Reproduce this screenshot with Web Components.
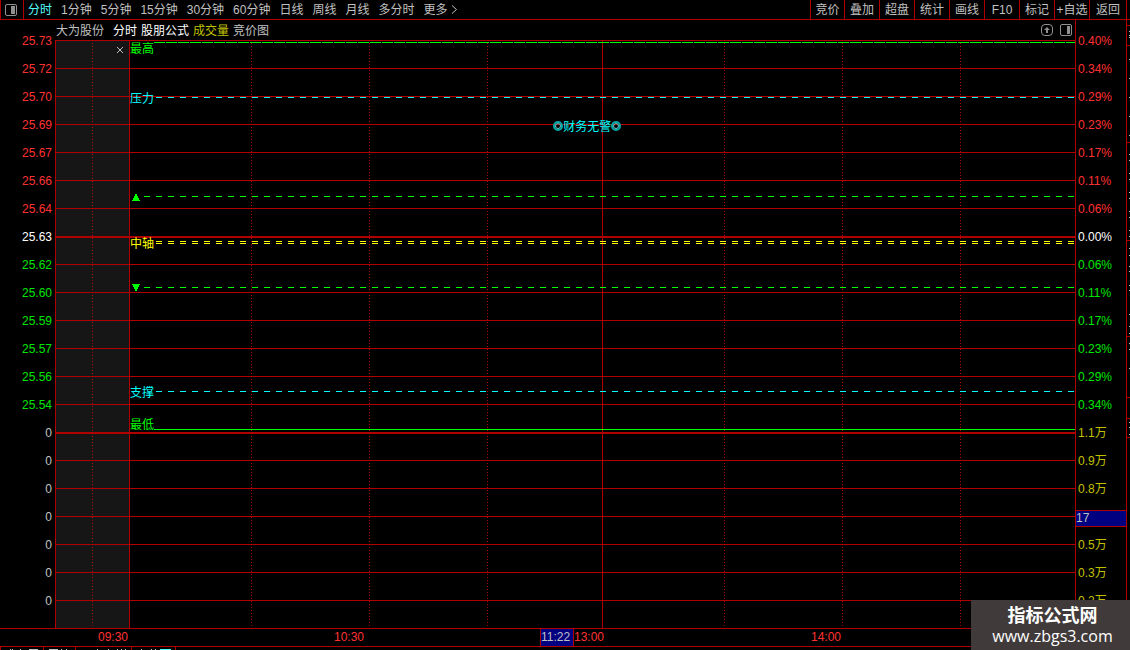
<!DOCTYPE html>
<html lang="zh-CN">
<head>
<meta charset="utf-8">
<title>大为股份 分时</title>
<style>
html{background:#000}
body{margin:0;overflow:hidden;background:#000;color:#c0c0c0;
 font:12px/16px "Liberation Sans","Noto Sans CJK SC",sans-serif;
 --line:#b00000;--up:#ff3232;--down:#00e600;--vol:#c0c000;--cyan:#00ffff}
</style>
</head>
<body>
<quote-app></quote-app>
<script>
const BASE = `*{box-sizing:border-box}
button{all:unset;box-sizing:border-box;cursor:pointer;white-space:nowrap}
svg{display:block}`;

function define(name, css, html) {
  customElements.define(name, class extends HTMLElement {
    connectedCallback() {
      if (this.shadowRoot) return;
      const root = this.attachShadow({ mode: "open" });
      root.innerHTML = `<style>${BASE}${css}</style>` + (typeof html === "function" ? html(this) : html);
    }
  });
}

const PANEL_ICON = `<svg width="12" height="12" viewBox="0 0 12 12" aria-hidden="true">
<rect x=".5" y=".5" width="11" height="11" rx="1.500" fill="none" stroke="currentColor"/>
<rect x="7" y="2" width="3" height="8" fill="currentColor"/></svg>`;

/* top toolbar */
const periods = ["分时","1分钟","5分钟","15分钟","30分钟","60分钟","日线","周线","月线","多分时","更多"];
const tools = ["竞价","叠加","超盘","统计","画线","F10","标记","+自选","返回"];
define("tool-bar", `
:host{display:flex;height:20px;border-bottom:1px solid var(--line)}
.panel{width:24px;border:solid var(--line);border-width:0 1px;display:flex;align-items:center;padding-left:4px;color:#909090}
nav{display:flex;align-items:center;gap:9px;padding-left:4px;flex:1}
nav .on{color:#54fcfc}
.more{display:flex;align-items:center;gap:3px}
.tools{display:flex;padding-right:3px}
.tools button{width:35px;border-left:1px solid var(--line);text-align:center;height:19px;line-height:20px}
.tools .first{width:34px}
.tools .wide{width:38px;border-right:1px solid var(--line)}`,
() => `<button class="panel" aria-label="侧栏"><svg width="12" height="12" viewBox="0 0 12 12" aria-hidden="true">
<rect x=".5" y=".5" width="11" height="11" rx="1.500" fill="none" stroke="currentColor"/><rect x="6" y="2" width="4" height="8" fill="currentColor"/></svg></button>
<nav>${periods.map((p, i) => i === periods.length - 1
  ? `<button class="more">${p}<svg width="7" height="9" viewBox="0 0 7 9" aria-hidden="true"><path d="M1 .5L5.500 4.500L1 8.500" fill="none" stroke="currentColor"/></svg></button>`
  : `<button class="${i ? "" : "on"}">${p}</button>`).join("")}</nav>
<div class="tools">${tools.map((t, i) => `<button class="${i === 8 ? "wide" : i === 0 ? "first" : ""}">${t}</button>`).join("")}</div>`);

/* study names over the chart */
define("study-header", `
:host{display:flex;align-items:center;gap:4px;height:20px;padding:0 3px 0 1px}
button,.name{line-height:18px;padding-top:2px}
.name{margin-right:5px}.w{color:#fff}.y{color:var(--vol)}
.icons{display:flex;gap:7px;margin-left:auto;color:#909090}
.icons button{padding:0}`,
`<span class="name">大为股份</span><button class="w">分时</button><button class="w">股朋公式</button>
<button class="y">成交量</button><button>竞价图</button>
<span class="icons"><button aria-label="上移"><svg width="12" height="12" viewBox="0 0 12 12" aria-hidden="true">
<rect x=".5" y=".5" width="11" height="11" rx="3.500" fill="none" stroke="currentColor"/>
<path d="M6 3L9 6H7V9H5V6H3Z" fill="currentColor"/></svg></button>
<button aria-label="面板">${PANEL_ICON}</button></span>`);

/* axis labels, one for each grid line */
define("value-axis", `
:host{display:block;padding-top:7px;color:#c0c0c0}
:host([side=left]) div{text-align:right;padding-right:3px}
:host([side=right]){border-left:1px solid var(--line)}
:host([side=right]) div{padding-left:2px}
div{height:28px;line-height:28px;white-space:nowrap}
.up{color:var(--up)}.down{color:var(--down)}.mid{color:#fff}.vol{color:var(--vol)}
:host([side=right]) .cur{padding:7px 0 4px}
.cur span{display:block;height:17px;line-height:15px;background:#000080;border:solid var(--line);border-width:1px 0}`,
host => host.getAttribute("values").split(" ").map((v, i) => {
  const right = host.getAttribute("side") === "right";
  const c = v === "17" ? "cur" : i > 13 ? (right ? "vol" : "") : i < 7 ? "up" : i === 7 ? "mid" : "down";
  return `<div class="${c}"><span>${v}</span></div>`;
}).join(""));

/* a labelled level drawn across the plot */
define("level-line", `
:host{position:absolute;left:74px;right:0;height:12px;display:flex;line-height:14px;color:var(--c)}
span{white-space:nowrap}
i{flex:1;height:1px;margin-left:var(--gap,2px);margin-top:var(--drop);
 background:repeating-linear-gradient(90deg,var(--c) 0 var(--on,6px),transparent var(--on,6px) 12px)}
:host([double]) i{height:3px;-webkit-mask:linear-gradient(#000 0 1px,transparent 1px 2px,#000 2px);mask:linear-gradient(#000 0 1px,transparent 1px 2px,#000 2px)}`,
`<span><slot></slot></span><i></i>`);

const ring = `<svg width="10" height="10" viewBox="0 0 10 10" aria-hidden="true"><circle cx="5" cy="5" r="4" fill="none" stroke="#00aaaa" stroke-width="2"/><circle cx="5" cy="5" r="2.500" fill="none" stroke="#70c8c8"/></svg>`;
const tri = d => `<svg width="12" height="12" viewBox="0 0 12 12" shape-rendering="crispEdges" aria-hidden="true"><path d="${d}" fill="currentColor"/></svg>`;
define("price-plot", `
:host{display:grid;position:relative;border-left:1px solid var(--line)}
.cols,.rows{grid-area:1/1;display:grid}
.cols{grid-template-columns:73px 122fr 118fr 118fr 115fr 122fr 118fr 118fr 115fr}
.cols b{background:repeating-linear-gradient(var(--line) 0 1px,transparent 1px 3px) 0 3px/1px 100% no-repeat}
.cols .pre{background:repeating-linear-gradient(var(--line) 0 1px,transparent 1px 3px) 36px 3px/1px 100% no-repeat #161616}
.cols .solid{background:none;border-left:1px solid var(--line)}
.rows i{height:28px;border-top:1px solid var(--line)}
.rows .thick{border-top-width:2px}
.close{position:absolute;left:60px;top:6px;width:8px;height:8px}
.note{position:absolute;left:48.8%;top:80px;height:12px;line-height:14px;display:flex;align-items:center;color:var(--cyan);white-space:nowrap}
.note span{padding-top:1px}
.h{top:2px;--c:#00ff00;--on:11px;--gap:0px;--drop:0px}
.p{top:52px;--c:var(--cyan);--drop:5px}
.u{top:151px;--c:#00ff00;--drop:5px}
.m{top:197px;--c:#ffff00;--drop:4px}
.d{top:241px;--c:#00ff00;--drop:6px}
.s{top:346px;--c:var(--cyan);--drop:5px}
.l{top:378px;--c:#00ff00;--on:12px;--gap:0px;--drop:11px}`,
`<div class="cols"><b class="pre"></b><b class="solid"></b><b></b><b></b><b></b><b class="solid"></b><b></b><b></b><b></b></div>
<div class="rows">${Array.from({ length: 21 }, (_, i) => `<i class="${i === 7 || i === 14 ? "thick" : ""}"></i>`).join("")}</div>
<button class="close" aria-label="关闭"><svg width="8" height="8" viewBox="0 0 8 8"><path d="M1 1L7 7M7 1L1 7" stroke="#c0c0c0" fill="none"/></svg></button>
<level-line class="h">最高</level-line>
<level-line class="p">压力</level-line>
<level-line class="u">${tri("M5 3H7V5H8V7H9V9H10V10H2V9H3V7H4V5H5Z")}</level-line>
<level-line class="m" double>中轴</level-line>
<level-line class="d">${tri("M2 3H10V4H9V6H8V8H7V10H5V8H4V6H3V4H2Z")}</level-line>
<level-line class="s">支撑</level-line>
<level-line class="l">最低</level-line>
<div class="note">${ring}<span>财务无警</span>${ring}</div>`);

/* neighbouring pane, of which only the edge is in view */
const marks = [31,35,37,59,78,97,116,135,154,160,173,179,192,198,211,217,230,236,248,255,266,271,285,290,314,326,333,343,349,368,422,427,434];
const rules = [25,45,142,240,336,397,418,437];
define("side-pane", `:host{display:block;border-left:1px solid var(--line);overflow:hidden}`,
`<svg width="3" height="608" viewBox="0 20 3 608" aria-hidden="true">${
  rules.map(y => `<rect y="${y}" width="3" height="1" fill="#b00000"/>`).join("")}${
  marks.map(y => `<rect x="2" y="${y}" width="1" height="1" fill="#c0c0c0"/>`).join("")}</svg>`);

define("time-axis", `
:host{display:grid;grid-template-columns:98px 236fr 206fr 34px 237fr 315fr 4px;height:19px;line-height:17px;
 color:var(--up);border:solid var(--line);border-width:1px 0}
.now{background:#000080;color:#c0c0c0;border:solid var(--line);border-width:0 1px;line-height:16px}
.end{border-left:1px solid var(--line)}`,
`<span></span><span>09:30</span><span>10:30</span><span class="now">11:22</span><span>13:00</span><span>14:00</span><span class="end"></span>`);

/* upper edge of the tab row below the chart */
define("tab-strip", `:host{display:flex;height:3px;overflow:hidden}
svg{flex:none}`,
`<svg width="176" height="3" viewBox="0 0 176 3" aria-hidden="true"><path d="M.5 0V3M43.500 0V3M75.500 0V3M131.500 0V3M175.500 0V3" stroke="#b00000"/>
<path d="M10 2.500h1M12 2.500h1M20 2.500h1M29 2.500h9M49 2.500h9M61 2.500h1M66 2.500h1M97 2.500h1M108 2.500h1M117 2.500h1M121 2.500h1M125 2.500h1M141 2.500h1M151 2.500h1M155 2.500h1" stroke="#c0c0c0"/><path d="M160 2.500h11" stroke="#54fcfc"/></svg>`);

define("site-mark", `
:host{position:fixed;right:0;bottom:0;width:159px;height:50px;padding-left:4px;box-sizing:border-box;background:#403a3a;color:#fff;
 display:flex;flex-direction:column;align-items:center;justify-content:center;gap:2px}
strong{font:bold 18px/20px "Noto Sans CJK SC",sans-serif}
a{color:#fff;text-decoration:none;font:16px/20px "Open Sans","Noto Sans",sans-serif}`,
`<strong>指标公式网</strong><a href="#">www.zbgs3.com</a>`);

define("quote-app", `
:host{display:block}
main{display:grid;grid-template-columns:55px 1fr 51px 4px}
.mid{min-width:0}`,
`<tool-bar></tool-bar>
<main>
<value-axis side="left" values="25.73 25.72 25.70 25.69 25.67 25.66 25.64 25.63 25.62 25.60 25.59 25.57 25.56 25.54 0 0 0 0 0 0 0"></value-axis>
<div class="mid"><study-header></study-header><price-plot></price-plot></div>
<value-axis side="right" values="0.40% 0.34% 0.29% 0.23% 0.17% 0.11% 0.06% 0.00% 0.06% 0.11% 0.17% 0.23% 0.29% 0.34% 1.1万 0.9万 0.8万 17 0.5万 0.3万 0.2万"></value-axis>
<side-pane></side-pane>
</main>
<time-axis></time-axis><tab-strip></tab-strip><site-mark></site-mark>`);
</script>
</body>
</html>
